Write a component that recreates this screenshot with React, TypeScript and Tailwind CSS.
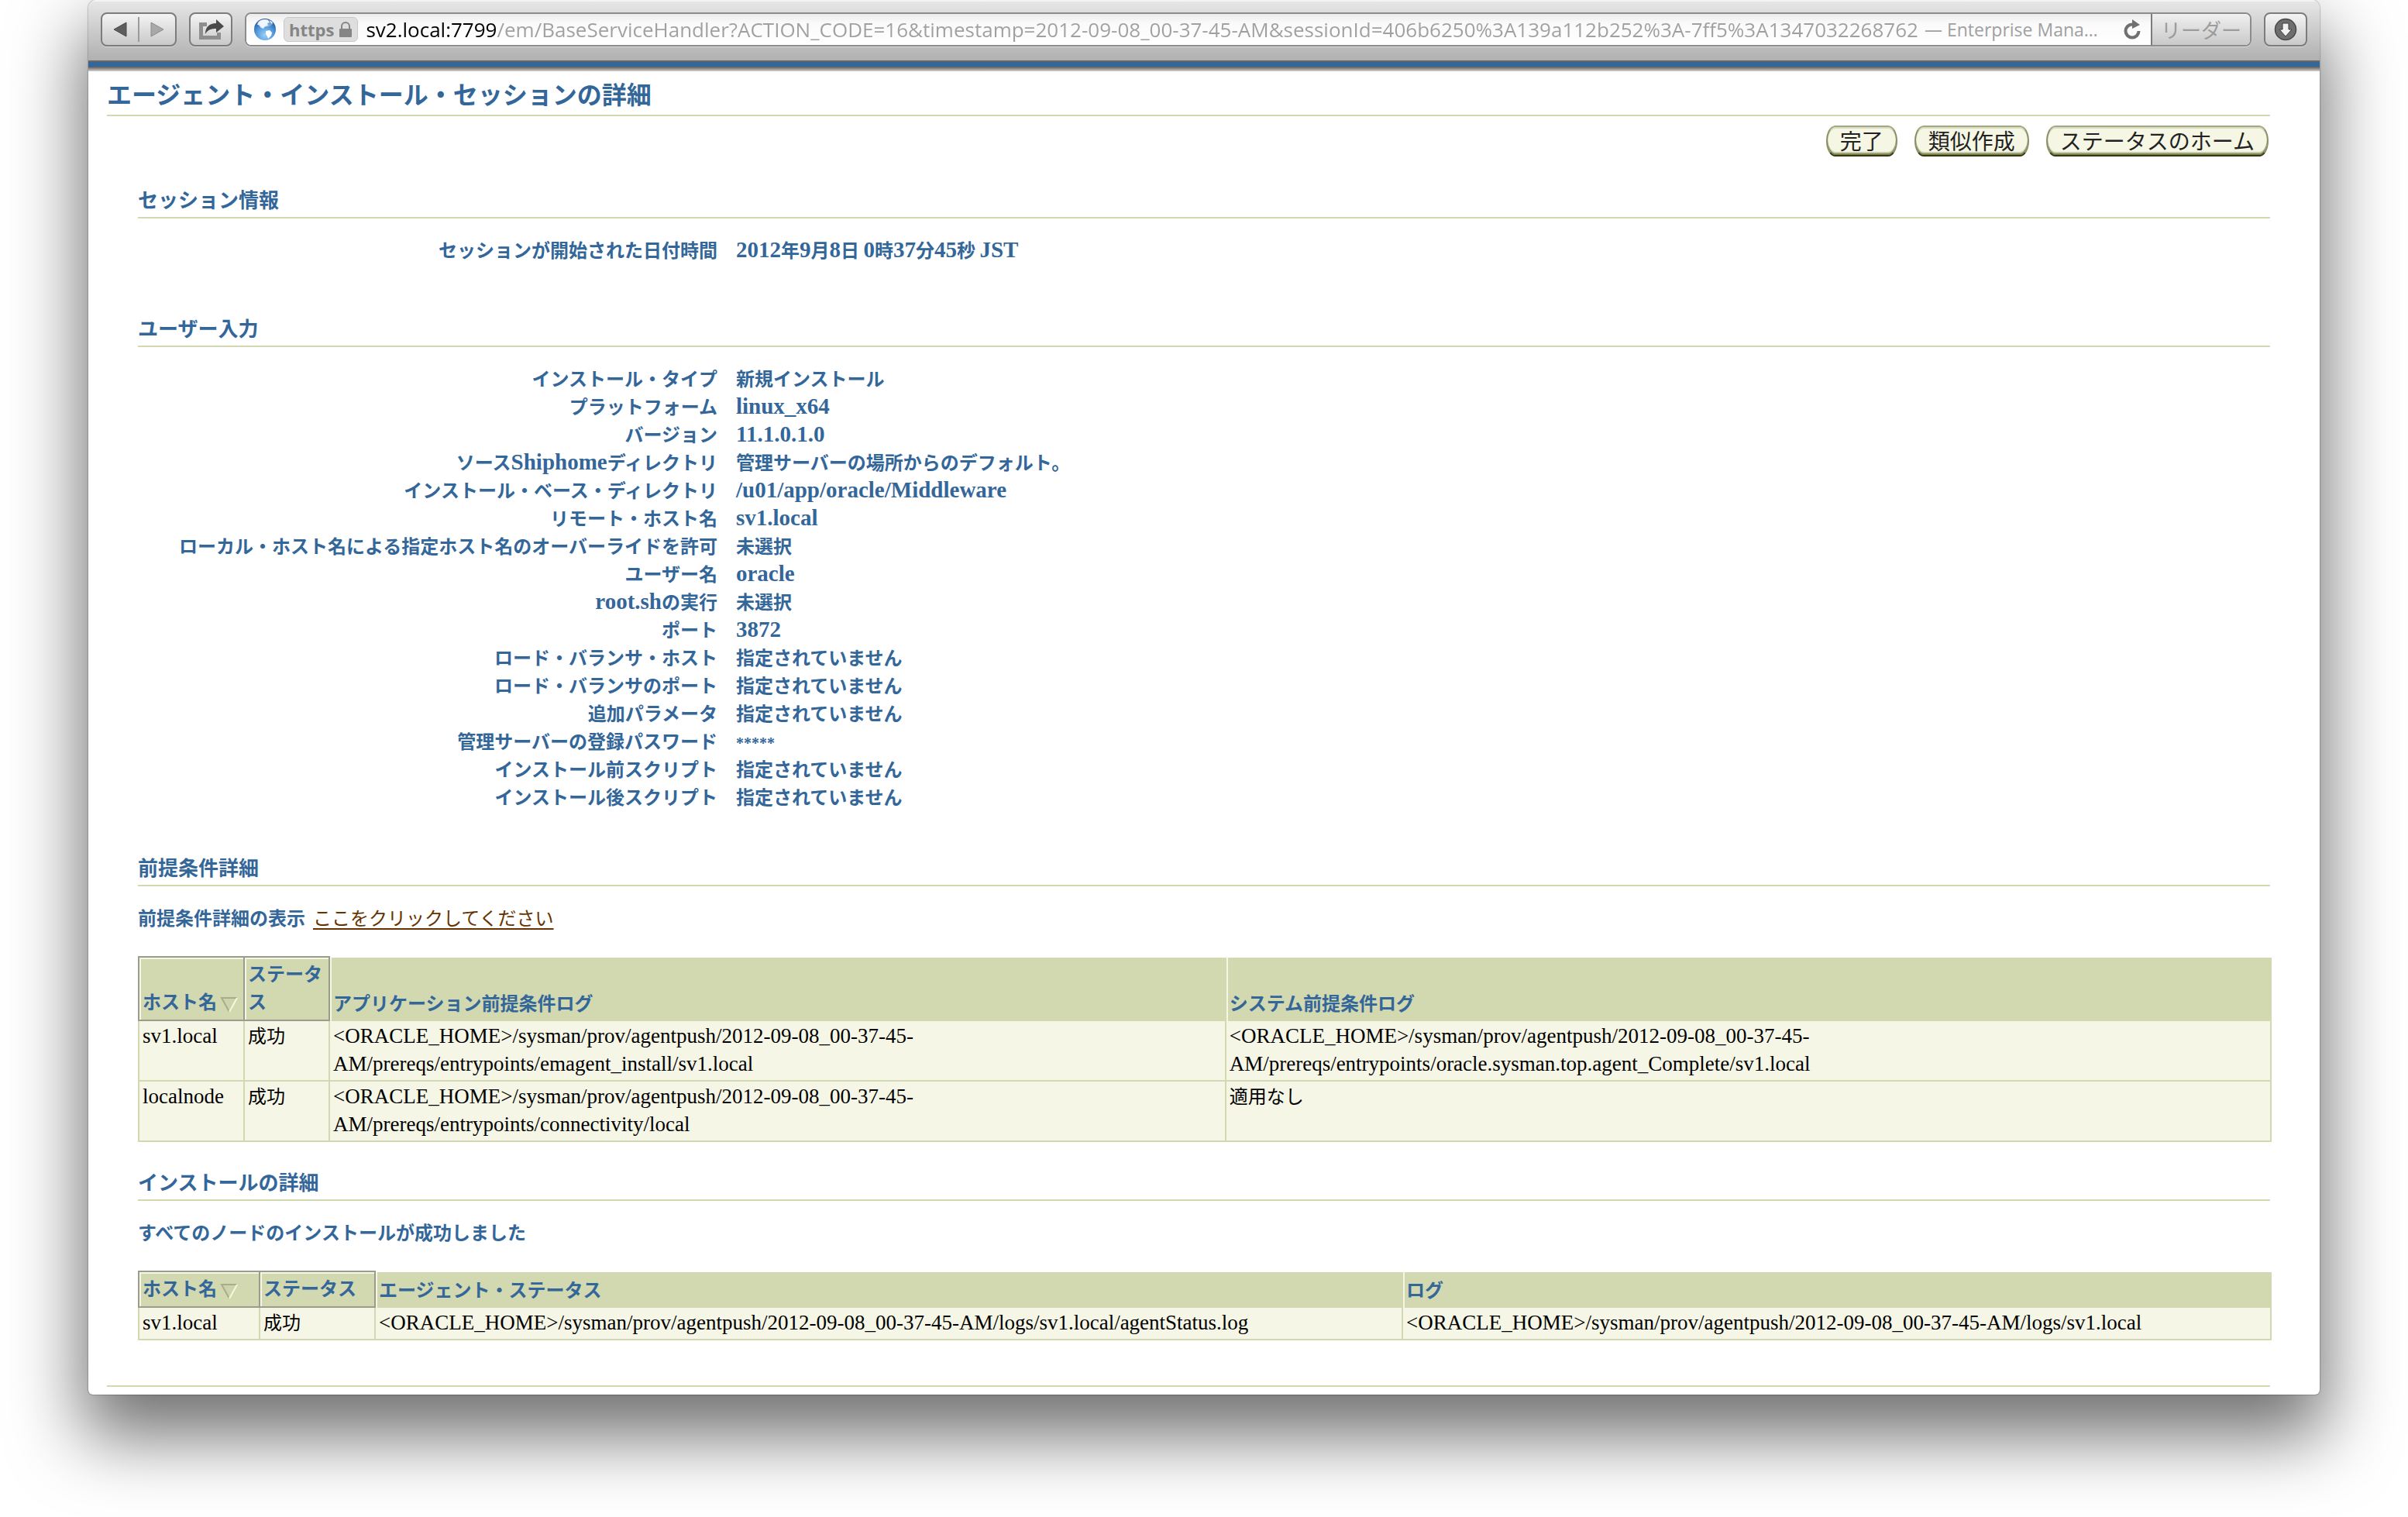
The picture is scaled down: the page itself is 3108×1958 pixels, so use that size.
import React from "react";

const sessionFields: [string, string][] = [["セッションが開始された日付時間", "2012年9月8日 0時37分45秒 JST"]];

const inputFields: [string, string][] = [
  ["インストール・タイプ", "新規インストール"],
  ["プラットフォーム", "linux_x64"],
  ["バージョン", "11.1.0.1.0"],
  ["ソースShiphomeディレクトリ", "管理サーバーの場所からのデフォルト。"],
  ["インストール・ベース・ディレクトリ", "/u01/app/oracle/Middleware"],
  ["リモート・ホスト名", "sv1.local"],
  ["ローカル・ホスト名による指定ホスト名のオーバーライドを許可", "未選択"],
  ["ユーザー名", "oracle"],
  ["root.shの実行", "未選択"],
  ["ポート", "3872"],
  ["ロード・バランサ・ホスト", "指定されていません"],
  ["ロード・バランサのポート", "指定されていません"],
  ["追加パラメータ", "指定されていません"],
  ["管理サーバーの登録パスワード", "*****"],
  ["インストール前スクリプト", "指定されていません"],
  ["インストール後スクリプト", "指定されていません"],
];

const PUSH_DIR = "<ORACLE_HOME>/sysman/prov/agentpush/2012-09-08_00-37-45-";

const prereqRows: { host: string; status: string; app: string[]; system: string[] }[] = [
  {
    host: "sv1.local",
    status: "成功",
    app: [PUSH_DIR, "AM/prereqs/entrypoints/emagent_install/sv1.local"],
    system: [PUSH_DIR, "AM/prereqs/entrypoints/oracle.sysman.top.agent_Complete/sv1.local"],
  },
  {
    host: "localnode",
    status: "成功",
    app: [PUSH_DIR, "AM/prereqs/entrypoints/connectivity/local"],
    system: ["適用なし"],
  },
];

/* Latin runs use a serif face, set larger so that they match the height of the kana. */
function Mixed({ children, bold = false }: { children: string; bold?: boolean }) {
  return (
    <>
      {children.split(/([!-)+-~]+)/).map((part, i) =>
        i % 2 ? (
          <span
            key={i}
            className={
              bold
                ? "font-['Liberation_Serif',serif] text-[29px] leading-none"
                : "font-['Liberation_Serif',serif] text-[27px] leading-none"
            }
          >
            {part}
          </span>
        ) : part.startsWith("*") ? (
          <span key={i} className="font-['Liberation_Serif',serif] text-xl leading-none">
            {part}
          </span>
        ) : (
          part
        ),
      )}
    </>
  );
}

function SectionTitle({ children }: { children: string }) {
  return (
    <h2 className="h-[46px] border-b-2 border-[#d2d8b0] text-[26px] leading-[42px] font-bold text-[#336699]">
      {children}
    </h2>
  );
}

function FieldList({ fields }: { fields: [string, string][] }) {
  return (
    <dl className="mt-[22px] font-bold text-[#336699]">
      {fields.map(([label, value]) => (
        <div key={label} className="flex h-9 items-baseline gap-6 leading-9 whitespace-nowrap">
          <dt className="w-[748px] shrink-0 text-right">
            <Mixed bold>{label}</Mixed>
          </dt>
          <dd>
            <Mixed bold>{value}</Mixed>
          </dd>
        </div>
      ))}
    </dl>
  );
}

function PushButton({ children }: { children: string }) {
  return (
    <button
      type="button"
      className="h-10 rounded-[12px/20px] border-2 border-t-[#a3a783] border-r-[#8a8f66] border-b-[#33380f] border-l-[#8a8f66] bg-[#f5f6e3] px-4 pb-0.5 text-[28px] leading-[34px] text-[#222] shadow-[inset_0_2px_0_#d9dcc0,inset_0_-2px_0_#7d8255,inset_0_-4px_0_#c6caa6]"
    >
      {children}
    </button>
  );
}

function SortMark() {
  return (
    <svg width="24" height="22" viewBox="0 0 24 22" fill="none" className="ml-1 inline-block align-[-6px]" aria-hidden="true">
      <path d="M2 2H22L12 20Z" fill="#cdd3ab" />
      <path d="M22 2H2L12 20" stroke="#a9ad8b" strokeWidth="2" />
      <path d="M22 2 12 20" stroke="#f7f7e0" strokeWidth="2" />
    </svg>
  );
}

const sortHead =
  "border-t-2 border-r-2 border-b-2 border-[#9c9c8c] bg-[#d2d8b0] px-1 pt-0.5 pb-1.5 text-left align-bottom text-[#336699] shadow-[inset_2px_2px_0_#f5f6e6] first:border-l-2 first:whitespace-nowrap";
const plainHead =
  "border-t-2 border-l-2 border-t-white border-l-[#f5f6e6] bg-[#d2d8b0] px-0.5 pt-0.5 pb-1.5 text-left align-bottom text-[#336699]";
const cell = "border-r-2 border-b-2 border-[#d2d8b0] bg-[#f5f6e6] pr-0.5 pb-1 pl-1 align-top first:border-l-2";

function PrereqTable() {
  return (
    <div className="mt-8 -mr-0.5">
      <table className="w-full table-fixed border-separate border-spacing-0 leading-9">
        <colgroup>
          <col className="w-[138px]" />
          <col className="w-[110px]" />
          <col className="w-[42%]" />
          <col />
        </colgroup>
        <thead>
          <tr>
            <th scope="col" className={sortHead}>
              ホスト名
              <SortMark />
            </th>
            <th scope="col" className={sortHead}>
              ステータス
            </th>
            <th scope="col" className={plainHead}>
              アプリケーション前提条件ログ
            </th>
            <th scope="col" className={plainHead}>
              システム前提条件ログ
            </th>
          </tr>
        </thead>
        <tbody>
          {prereqRows.map((row) => (
            <tr key={row.host} className="h-[78px]">
              <td className={cell}>
                <Mixed>{row.host}</Mixed>
              </td>
              <td className={cell}>{row.status}</td>
              {[row.app, row.system].map((lines, i) => (
                <td key={i} className={cell}>
                  {lines.map((line) => (
                    <div key={line} className="h-9 overflow-hidden whitespace-nowrap">
                      <Mixed>{line}</Mixed>
                    </div>
                  ))}
                </td>
              ))}
            </tr>
          ))}
        </tbody>
      </table>
    </div>
  );
}

function InstallTable() {
  return (
    <div className="mt-8 -mr-0.5">
      <table className="w-full table-fixed border-separate border-spacing-0 leading-9">
        <colgroup>
          <col className="w-[158px]" />
          <col className="w-[149px]" />
          <col className="w-[48.15%]" />
          <col />
        </colgroup>
        <thead>
          <tr>
            <th scope="col" className={sortHead}>
              ホスト名
              <SortMark />
            </th>
            <th scope="col" className={sortHead}>
              ステータス
            </th>
            <th scope="col" className={plainHead}>
              エージェント・ステータス
            </th>
            <th scope="col" className={plainHead}>
              ログ
            </th>
          </tr>
        </thead>
        <tbody>
          <tr className="h-[42px]">
            <td className={cell}>
              <Mixed>sv1.local</Mixed>
            </td>
            <td className={cell}>成功</td>
            <td className={cell}>
              <Mixed>{PUSH_DIR + "AM/logs/sv1.local/agentStatus.log"}</Mixed>
            </td>
            <td className={cell}>
              <Mixed>{PUSH_DIR + "AM/logs/sv1.local"}</Mixed>
            </td>
          </tr>
        </tbody>
      </table>
    </div>
  );
}

const toolButton =
  "flex h-11 items-center justify-center rounded-lg border-2 border-[#7c7c7c] bg-linear-to-b from-[#f4f4f4] to-[#c9c9c9] shadow-[0_1px_0_#dcdcdc]";

function BrowserBar() {
  return (
    <header className="flex h-20 items-start gap-4 border-b-2 border-[#666] bg-linear-to-b from-[#e8e8e8] to-[#b0b0b0] px-4 pt-4 shadow-[inset_0_2px_0_#f4f4f4]">
      <nav className={toolButton + " w-[98px]"} aria-label="履歴">
        <button type="button" aria-label="戻る" className="flex h-full flex-1 items-center justify-center">
          <svg width="18" height="20" viewBox="0 0 18 20" aria-hidden="true">
            <path d="M1 10 17 1V19Z" fill="#5e5e5e" stroke="#4a4a4a" strokeWidth="1" />
          </svg>
        </button>
        <span className="h-8 w-0.5 bg-[#9b9b9b]" />
        <button type="button" aria-label="進む" className="flex h-full flex-1 items-center justify-center">
          <svg width="18" height="20" viewBox="0 0 18 20" aria-hidden="true">
            <path d="M17 10 1 1V19Z" fill="#a8a8a8" stroke="#8a8a8a" strokeWidth="1" />
          </svg>
        </button>
      </nav>
      <button type="button" aria-label="共有" className={toolButton + " w-14"}>
        <svg width="34" height="30" viewBox="0 0 34 30" aria-hidden="true">
          <path d="M12 6H2V28H30V19H25V23H7V11H12Z" fill="#8e8e8e" />
          <path d="M10 21C10 12 15 7 24 7V2L34 11 24 19V14C18 14 13 15 10 21Z" fill="#4a4a4a" />
        </svg>
      </button>
      <div className="flex h-11 min-w-0 flex-1 overflow-hidden rounded-lg border-2 border-[#8c8c8c] bg-white shadow-[0_1px_0_#dcdcdc]">
        <div className="flex min-w-0 flex-1 items-center bg-linear-to-b from-[#ececec] via-[#fafafa] via-30% to-white pr-3 pl-2 font-['Open_Sans',sans-serif]">
          <svg width="32" height="32" viewBox="0 0 32 32" className="shrink-0" aria-hidden="true">
            <defs>
              <radialGradient id="sea" cx="0.5" cy="0.75" r="0.75">
                <stop offset="0" stopColor="#9fd0f7" />
                <stop offset="0.55" stopColor="#4f97dc" />
                <stop offset="1" stopColor="#1d4f98" />
              </radialGradient>
            </defs>
            <circle cx="16" cy="16" r="14" fill="url(#sea)" />
            <path d="M8 6C11 3 17 2 20 4L22 7 19 8 20 11 16 12 14 15 11 14 8 10 6 10Z" fill="#e8f2fb" />
            <path d="M22 4 26 7 25 9 23 7Z" fill="#cfe3f6" />
            <path d="M17 18 22 17 25 20 24 24 20 28 19 25 17 22Z" fill="#fff" />
            <ellipse cx="16" cy="8" rx="10" ry="5" fill="#fff" opacity="0.3" />
          </svg>
          <div className="ml-2 flex h-8 shrink-0 items-center gap-1.5 rounded-md border border-[#c8c8c8] bg-[#dedede] px-1.5 text-[22px] leading-8 font-bold text-[#858585]">
            https
            <svg width="18" height="20" viewBox="0 0 18 20" fill="none" aria-hidden="true">
              <path d="M4 9V6a5 5 0 0 1 10 0V9" stroke="#858585" strokeWidth="2" />
              <rect x="1" y="9" width="16" height="11" rx="1" fill="#858585" />
            </svg>
          </div>
          <input
            type="text"
            readOnly
            aria-label="アドレス"
            value="sv2.local:7799/em/BaseServiceHandler?ACTION_CODE=16&timestamp=2012-09-08_00-37-45-AM&sessionId=406b6250%3A139a112b252%3A-7ff5%3A1347032268762"
            className="ml-2.5 field-sizing-content min-w-0 bg-[linear-gradient(to_right,#000_170px,#a0a0a0_170px)] bg-clip-text text-[26px] leading-10 text-transparent outline-none"
          />
          <span className="ml-2 shrink-0 text-[23px] leading-10 text-[#a0a0a0]">— Enterprise Mana…</span>
          <button type="button" aria-label="再読み込み" className="ml-auto shrink-0">
            <svg width="24" height="28" viewBox="0 0 24 28" fill="none" aria-hidden="true">
              <path d="M12 7.500A8.500 8.500 0 1 0 20.500 16" stroke="#707070" strokeWidth="4" />
              <path d="M12 1V13L22 8Z" fill="#707070" />
            </svg>
          </button>
        </div>
        <button
          type="button"
          className="w-[128px] shrink-0 border-l-2 border-[#7c7c7c] bg-linear-to-b from-[#f0f0f0] to-[#c9c9c9] text-[26px] leading-9 text-[#9c9c9c]"
        >
          リーダー
        </button>
      </div>
      <button type="button" aria-label="ダウンロード" className={toolButton + " w-14"}>
        <svg width="30" height="30" viewBox="0 0 30 30" aria-hidden="true">
          <circle cx="15" cy="15" r="13.500" fill="#6e6e6e" stroke="#484848" strokeWidth="1.500" />
          <path d="M11 7H19V15H23L15 24 7 15H11Z" fill="#f2f2f2" stroke="#3c3c3c" strokeWidth="1" />
        </svg>
      </button>
    </header>
  );
}

export default function App() {
  return (
    <div className="bg-white px-[114px] pb-[158px] font-['Noto_Sans_CJK_JP',sans-serif]">
      <div className="overflow-hidden rounded-t-[10px] rounded-b-md bg-white shadow-[0_0_2px_rgba(0,0,0,0.6),0_46px_92px_8px_rgba(0,0,0,0.56)]">
        <BrowserBar />
        <div className="h-1.5 bg-[#336699]" />
        <div className="h-1.5 bg-linear-to-b from-[#5a5a5a] to-[#d8d0d0]" />
        <main className="pr-16 pb-2.5 pl-6 text-2xl text-black">
          <h1 className="h-[58px] border-b-2 border-[#d2d8b0] text-[32px] leading-[56px] font-bold text-[#336699]">
            エージェント・インストール・セッションの詳細
          </h1>
          <div className="mt-3 mr-0.5 flex justify-end gap-[22px]">
            <PushButton>完了</PushButton>
            <PushButton>類似作成</PushButton>
            <PushButton>ステータスのホーム</PushButton>
          </div>
          <div className="ml-10">
            <section className="mt-[34px]">
              <SectionTitle>セッション情報</SectionTitle>
              <FieldList fields={sessionFields} />
            </section>
            <section className="mt-[62px]">
              <SectionTitle>ユーザー入力</SectionTitle>
              <FieldList fields={inputFields} />
            </section>
            <section className="mt-[52px]">
              <SectionTitle>前提条件詳細</SectionTitle>
              <p className="mt-[22px] flex gap-2.5 leading-9 text-[#336699]">
                <strong className="font-bold">前提条件詳細の表示</strong>
                <a href="#prereqs" className="text-[#663300] underline decoration-2 underline-offset-4">
                  ここをクリックしてください
                </a>
              </p>
              <PrereqTable />
            </section>
            <section className="mt-[30px]">
              <SectionTitle>インストールの詳細</SectionTitle>
              <p className="mt-[22px] leading-9 font-bold text-[#336699]">すべてのノードのインストールが成功しました</p>
              <InstallTable />
            </section>
          </div>
          <hr className="mt-[58px] border-t-2 border-[#d2d8b0]" />
        </main>
      </div>
    </div>
  );
}
